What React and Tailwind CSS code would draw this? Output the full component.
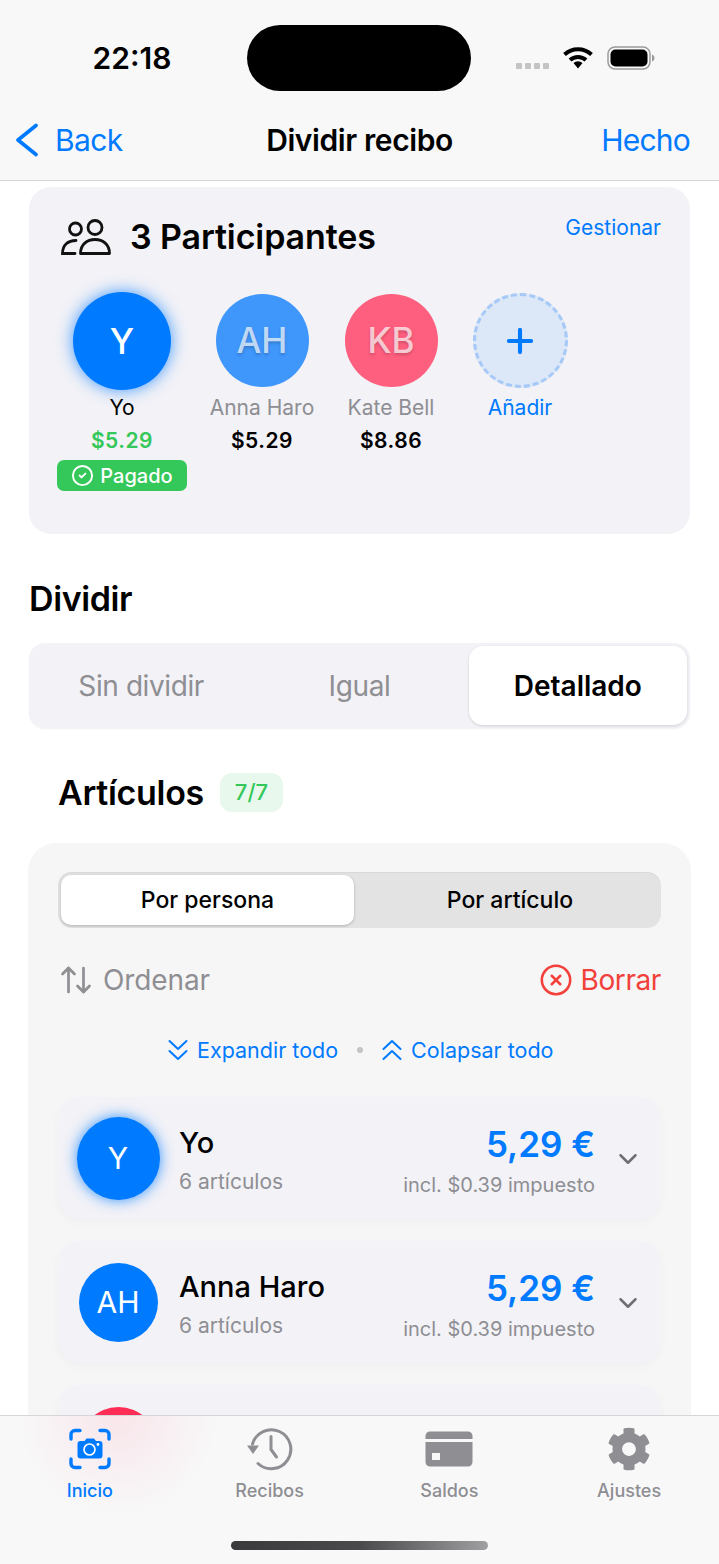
import { ArrowUpDown, ChevronDown, CircleCheck, CircleX, Plus } from "lucide-react";
import { FaCog } from "react-icons/fa";

// third row only peeks out above the tab bar, so it has no text
const rows = [
  { id: "yo", initials: "Y", name: "Yo", total: "5,29 €", tax: "$0.39", avatar: "w-[83px] h-[83px] bg-[#007aff] shadow-[0_0_14px_rgba(0,122,255,0.8)]" },
  { id: "ah", initials: "AH", name: "Anna Haro", total: "5,29 €", tax: "$0.39", avatar: "w-[79px] h-[79px] bg-[#007aff]" },
  { id: "kb", avatar: "w-[79px] h-[79px] bg-[#ff2d55]" },
];

function WifiIcon() {
  return (
    <svg width="30" height="23" viewBox="0 0 30 23" fill="none" stroke="black" strokeWidth="4">
      <path d="M1.5 8.5A20 20 0 0 1 28.5 8.5" />
      <path d="M7 14A12 12 0 0 1 23 14" />
      <path d="M10.5 17L15 22.5L19.5 17A7 7 0 0 0 10.5 17Z" fill="black" stroke="none" />
    </svg>
  );
}

function BatteryIcon() {
  return (
    <svg width="48" height="24" viewBox="0 0 48 24">
      <rect x="1" y="1" width="42" height="22" rx="7" fill="none" stroke="#9a9a9c" strokeWidth="1.5" />
      <rect x="3.5" y="3.5" width="37" height="17" rx="5" fill="black" />
      <path d="M45 8.5C46.5 9 47.5 10.5 47.5 12C47.5 13.5 46.5 15 45 15.5Z" fill="#9a9a9c" />
    </svg>
  );
}

function BackIcon() {
  return (
    <svg width="24" height="34" viewBox="0 0 24 34" fill="none" stroke="#007aff" strokeWidth="3.6" strokeLinecap="round" strokeLinejoin="round">
      <path d="M21 2.5L3 17L21 31.5" />
    </svg>
  );
}

function PeopleIcon() {
  return (
    <svg width="50" height="38" viewBox="0 0 50 38" fill="none" stroke="#111" strokeWidth="2.8">
      <circle cx="34" cy="9.5" r="7" />
      <path d="M19.5 35.5C19.5 26.5 26 21.5 34 21.5C42 21.5 48.5 26.5 48.5 35.5Z" strokeLinejoin="round" />
      <circle cx="14.5" cy="11" r="6" />
      <path d="M15 22.5C7 22.5 1.5 27 1.5 35.5H14" strokeLinecap="round" />
    </svg>
  );
}

function DoubleChevron({ up }) {
  return (
    <svg width="20" height="22" viewBox="0 0 20 22" fill="none" stroke="#007aff" strokeWidth="2" strokeLinecap="round" strokeLinejoin="round">
      {up ? <path d="M1.5 10L10 2L18.5 10M1.5 20L10 12L18.5 20" /> : <path d="M1.5 2L10 10L18.5 2M1.5 12L10 20L18.5 12" />}
    </svg>
  );
}

function ScanIcon() {
  return (
    <svg width="42" height="42" viewBox="0 0 42 42" fill="none">
      <g stroke="#007aff" strokeWidth="3.4" strokeLinecap="round">
        <path d="M11 2.5H6A4 4 0 0 0 2 6.5V11" />
        <path d="M31 2.5H36A4 4 0 0 1 40 6.5V11" />
        <path d="M11 39.5H6A4 4 0 0 1 2 35.5V31" />
        <path d="M31 39.5H36A4 4 0 0 0 40 35.5V31" />
      </g>
      <path d="M12 13H15.5L17.5 10.5H25L27 13H30.5A3 3 0 0 1 33.5 16V27.5A3 3 0 0 1 30.5 30.5H11.5A3 3 0 0 1 8.5 27.5V16A3 3 0 0 1 11.5 13Z" fill="#007aff" />
      <circle cx="20.5" cy="21.5" r="5.5" fill="none" stroke="white" strokeWidth="1.6" />
      <circle cx="29" cy="16.5" r="1.4" fill="white" />
    </svg>
  );
}

function HistoryIcon() {
  return (
    <svg width="46" height="44" viewBox="0 0 46 44" fill="none" stroke="#8e8e93" strokeWidth="3" strokeLinecap="round">
      <path d="M5.5 17A19.5 19.5 0 1 1 11 36.5" />
      <path d="M0 18.5H12L6 27Z" fill="#8e8e93" stroke="none" />
      <path d="M24 9.5V22.5L29.5 30" strokeLinejoin="round" />
    </svg>
  );
}

function CardIcon() {
  return (
    <svg width="48" height="36" viewBox="0 0 48 36">
      <path d="M5 0.5H43A4.5 4.5 0 0 1 47.5 5V8H0.5V5A4.5 4.5 0 0 1 5 0.5Z" fill="#8e8e93" />
      <path d="M0.5 11H47.5V31A4.5 4.5 0 0 1 43 35.5H5A4.5 4.5 0 0 1 0.5 31ZM7 22V29H15V22Z" fill="#8e8e93" fillRule="evenodd" />
    </svg>
  );
}

function Participant({ initials, name, amount, color }) {
  return (
    <div className="w-[112px] flex flex-col items-center">
      <div className={`w-[93px] h-[93px] mt-[2px] rounded-full flex items-center justify-center text-[35px] font-medium text-white/70 [text-shadow:0_2px_3px_rgba(0,0,0,0.18)] ${color}`}>
        {initials}
      </div>
      <div className="mt-[8px] text-[21px] leading-[26px] text-[#8e8e93] whitespace-nowrap">{name}</div>
      <div className="mt-[7px] text-[21px] leading-[26px] font-semibold tracking-[0.5px] text-black">{amount}</div>
    </div>
  );
}

function PersonRow({ row }) {
  return (
    <div className="h-[122px] rounded-[22px] bg-[#f2f2f7] shadow-[0_3px_10px_rgba(0,0,0,0.03)] flex items-center">
      <div className="w-[121px] flex justify-center shrink-0 pr-[1px]">
        <div className={`rounded-full flex items-center justify-center text-white text-[30px] ${row.avatar}`}>{row.initials}</div>
      </div>
      {row.name && (
        <>
          <div className="flex-1 mt-[4px]">
            <div className="text-[29px] leading-[36px] font-medium text-black">{row.name}</div>
            <div className="mt-[8px] text-[21px] leading-[26px] text-[#8e8e93]">6 artículos</div>
          </div>
          <div className="flex flex-col items-end mt-[5px]">
            <div className="text-[35px] leading-[42px] font-semibold text-[#007aff]">{row.total}</div>
            <div className="mt-[7px] text-[20px] leading-[26px] text-[#8e8e93]">incl. {row.tax} impuesto</div>
          </div>
          <div className="w-[66px] flex justify-center mt-[2px]">
            <ChevronDown size={30} strokeWidth={2} color="#6e6e73" />
          </div>
        </>
      )}
    </div>
  );
}

function Tab({ label, active, children }) {
  return (
    <div className="w-[180px] flex flex-col items-center">
      <div className="h-[46px] flex items-center justify-center">{children}</div>
      <div className={`mt-[7px] text-[18px] leading-[24px] font-medium ${active ? "text-[#007aff]" : "text-[#8e8e93]"}`}>{label}</div>
    </div>
  );
}

export default function App() {
  return (
    <div className="w-[719px] h-[1564px] overflow-hidden flex flex-col bg-white font-['Inter',sans-serif] text-black">
      {/* Status bar + nav */}
      <header className="h-[181px] shrink-0 bg-[#f8f8f9] border-b border-[#d6d6d8]">
        <div className="h-[100px] pt-[25px] flex">
          <div className="w-[247px] h-[66px] pl-[17px] flex items-center justify-center text-[30px] font-semibold">22:18</div>
          <div className="w-[224px] h-[66px] rounded-[33px] bg-black"></div>
          <div className="h-[66px] pl-[45px] flex items-center">
            <div className="flex gap-[3px] mt-[16px]">
              <span className="w-[6px] h-[6px] rounded-[1px] bg-[#c4c4c6]"></span>
              <span className="w-[6px] h-[6px] rounded-[1px] bg-[#c4c4c6]"></span>
              <span className="w-[6px] h-[6px] rounded-[1px] bg-[#c4c4c6]"></span>
              <span className="w-[6px] h-[6px] rounded-[1px] bg-[#c4c4c6]"></span>
            </div>
            <div className="ml-[14px] -mt-[1px]"><WifiIcon /></div>
            <div className="ml-[14px] -mt-[1px]"><BatteryIcon /></div>
          </div>
        </div>
        <div className="h-[80px] flex items-center justify-between pl-[15px] pr-[29px]">
          <div className="w-[214px] flex items-center text-[30px] tracking-[-0.6px] text-[#007aff]">
            <BackIcon />
            <span className="ml-[16px]">Back</span>
          </div>
          <div className="text-[30px] font-semibold tracking-[-0.4px]">Dividir recibo</div>
          <div className="w-[200px] text-right text-[30px] tracking-[-0.8px] text-[#007aff]">Hecho</div>
        </div>
      </header>

      <main className="flex-1 min-h-0 overflow-hidden pt-[6px]">
        {/* Participants */}
        <section className="mx-[29px] h-[347px] rounded-[22px] bg-[#f2f2f7] pt-[29px] pl-[28px] pr-[29px]">
          <div className="flex items-start justify-between pl-[4px]">
            <div className="flex items-center gap-[19px]">
              <PeopleIcon />
              <div className="text-[34px] leading-[42px] font-semibold tracking-[-0.1px]">3 Participantes</div>
            </div>
            <div className="text-[21px] leading-[24px] text-[#007aff]">Gestionar</div>
          </div>
          <div className="mt-[34px] flex gap-[17px]">
            <div className="w-[130px] mr-[2px] flex flex-col items-center">
              <div className="w-[98px] h-[98px] rounded-full bg-[#007aff] shadow-[0_0_16px_rgba(0,122,255,0.75)] flex items-center justify-center text-white text-[35px] font-medium">Y</div>
              <div className="mt-[5px] text-[21px] leading-[26px] text-black">Yo</div>
              <div className="mt-[7px] text-[21px] leading-[26px] font-semibold tracking-[0.5px] text-[#34c759]">$5.29</div>
              <div className="mt-[6px] w-[130px] h-[31px] rounded-[7px] bg-[#34c759] flex items-center justify-center gap-[6px] text-white text-[20px] font-medium">
                <CircleCheck size={23} strokeWidth={2} />
                Pagado
              </div>
            </div>
            <Participant initials="AH" name="Anna Haro" amount="$5.29" color="bg-[#3f96fb]" />
            <Participant initials="KB" name="Kate Bell" amount="$8.86" color="bg-[#ff5f7e]" />
            <div className="w-[112px] flex flex-col items-center">
              <div className="w-[95px] h-[95px] mt-[1px] rounded-full bg-[#dce8f8] border-[3px] border-dashed border-[#a6c9f7] flex items-center justify-center">
                <Plus size={38} strokeWidth={2.6} color="#007aff" />
              </div>
              <div className="mt-[7px] text-[21px] leading-[26px] text-[#007aff]">Añadir</div>
            </div>
          </div>
        </section>

        {/* Split mode */}
        <h2 className="mt-[43px] ml-[29px] text-[34px] leading-[44px] font-semibold tracking-[-0.4px]">Dividir</h2>
        <div className="mt-[22px] mx-[29px] h-[85px] rounded-[16px] bg-[#f2f2f7] p-[3px] flex shadow-[0_1px_2px_rgba(0,0,0,0.06)]">
          <div className="flex-1 flex items-center justify-center text-[28px] tracking-[-0.4px] text-[#8e8e93]">Sin dividir</div>
          <div className="flex-1 flex items-center justify-center text-[28px] tracking-[-0.4px] text-[#8e8e93]">Igual</div>
          <div className="flex-1 rounded-[14px] bg-white shadow-[0_1px_3px_rgba(0,0,0,0.14)] flex items-center justify-center text-[28px] font-semibold">Detallado</div>
        </div>

        {/* Items */}
        <div className="mt-[45px] ml-[58px] flex items-center gap-[16px]">
          <h2 className="text-[34px] leading-[39px] font-semibold tracking-[-0.3px]">Artículos</h2>
          <div className="w-[63px] h-[39px] rounded-[12px] bg-[#e8f8ec] flex items-center justify-center text-[22px] font-medium text-[#34c759]">7/7</div>
        </div>

        <section className="mt-[31px] mx-[28px] rounded-[28px] bg-[#f6f6f7] px-[30px] pt-[29px] pb-[20px]">
          <div className="h-[56px] rounded-[14px] bg-[#e3e3e4] p-[3px] flex shadow-[inset_0_1px_1px_rgba(0,0,0,0.05)]">
            <div className="w-[293px] rounded-[10px] bg-white shadow-[0_1px_3px_rgba(0,0,0,0.22)] flex items-center justify-center text-[23px] font-medium">Por persona</div>
            <div className="flex-1 pl-[8px] flex items-center justify-center text-[23px] font-medium">Por artículo</div>
          </div>

          <div className="mt-[33px] h-[38px] flex items-center justify-between">
            <div className="flex items-center gap-[9px] text-[28px] tracking-[-0.1px] text-[#8e8e93]">
              <ArrowUpDown size={36} strokeWidth={1.8} color="#8e8e93" />
              Ordenar
            </div>
            <div className="flex items-center gap-[8px] text-[28px] tracking-[-0.4px] text-[#f2403a]">
              <CircleX size={34} strokeWidth={1.8} color="#f2403a" />
              Borrar
            </div>
          </div>

          <div className="mt-[37px] h-[28px] pl-[110px] flex items-center text-[21.5px] text-[#007aff]">
            <DoubleChevron />
            <span className="ml-[9px]">Expandir todo</span>
            <span className="ml-[19px] w-[6px] h-[6px] rounded-full bg-[#c4c4c6]"></span>
            <span className="ml-[19px]"><DoubleChevron up /></span>
            <span className="ml-[9px]">Colapsar todo</span>
          </div>

          <div className="mt-[33px] flex flex-col gap-[22px]">
            {rows.map((row) => (
              <PersonRow key={row.id} row={row} />
            ))}
          </div>
        </section>
      </main>

      {/* Tab bar */}
      <footer className="h-[149px] shrink-0 border-t border-[#d6d6d8] bg-[#f8f8f9] bg-[radial-gradient(circle_at_118px_0px,rgba(255,45,85,0.09),transparent_100px)]">
        <div className="pt-[10px]">
          <div className="flex">
            <Tab label="Inicio" active><ScanIcon /></Tab>
            <Tab label="Recibos"><HistoryIcon /></Tab>
            <Tab label="Saldos"><CardIcon /></Tab>
            <Tab label="Ajustes"><FaCog size={44} color="#8e8e93" /></Tab>
          </div>
        </div>
        <div className="mt-[38px] mx-auto w-[257px] h-[9px] rounded-full bg-gradient-to-r from-[#3a3a3c] via-[#4a4a4c] to-[#a0a0a2]"></div>
      </footer>
    </div>
  );
}
